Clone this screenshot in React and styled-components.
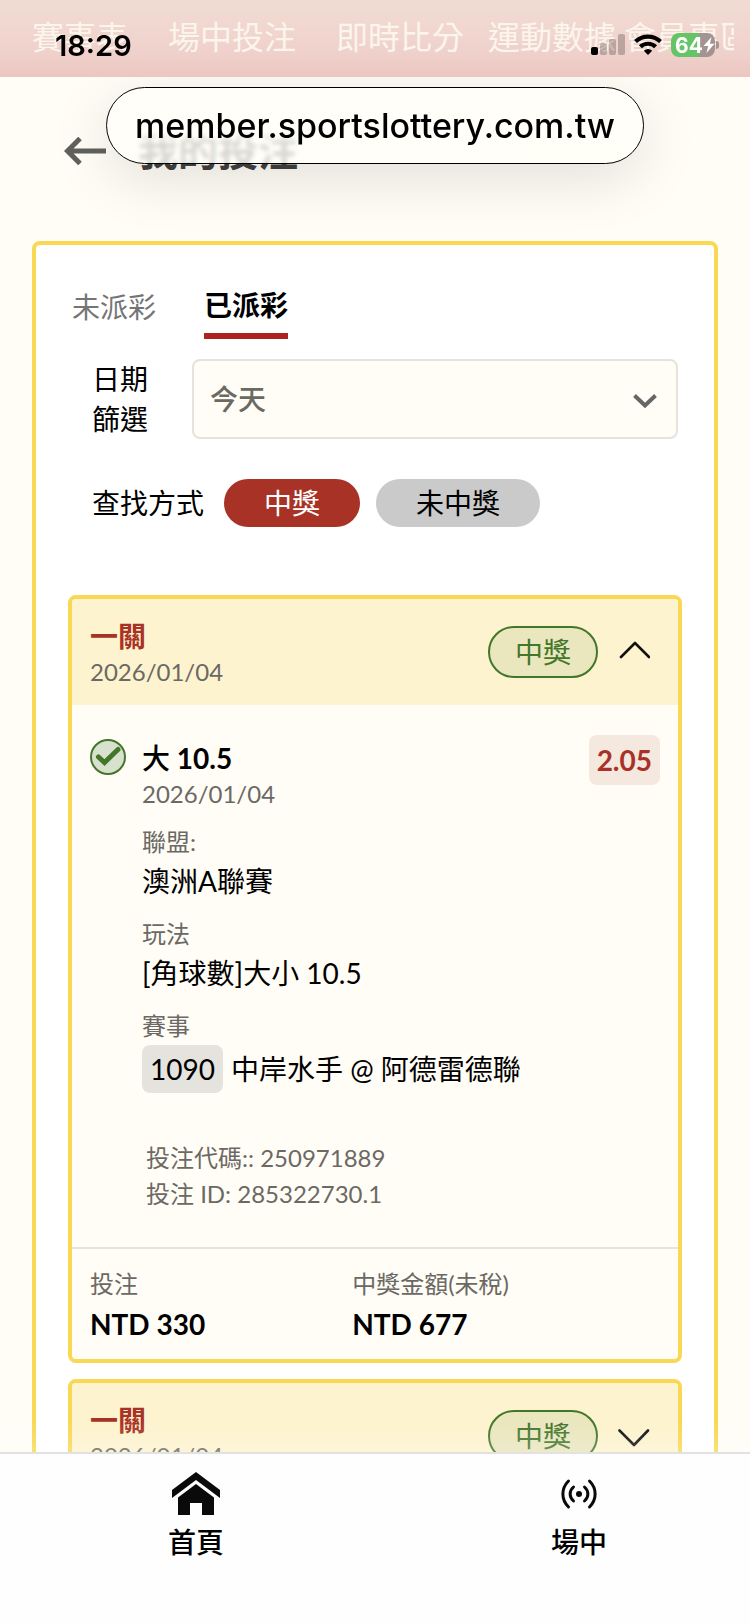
import React, { useState } from "react";
import styled, { createGlobalStyle } from "styled-components";

const color = {
  page: "#fffdf6",
  gold: "#f9d853",
  goldSoft: "#fdf3ce",
  red: "#a83226",
  green: "#43762b",
  muted: "#6b6964",
  line: "#e5e3dd",
};

const GlobalStyle = createGlobalStyle`
  * { box-sizing: border-box; }
  html, body { margin: 0; background: ${color.page}; }
  body {
    font-family: Lato, "Noto Sans CJK TC", sans-serif;
    font-size: 28px;
    color: #000;
  }
  button, select { font: inherit; color: inherit; }
  p, h1, h2, h3, dl, dd, ul { margin: 0; padding: 0; }
  h1, h2, h3 { font-size: inherit; }
`;

const Page = styled.div`
  height: 100vh;
  overflow: hidden;
  background: ${color.page};
`;

/* ---------- site navigation strip ---------- */

const Banner = styled.header`
  position: relative;
  z-index: 3;
  height: 77px;
  padding: 0 16px 0 32px;
  background: linear-gradient(#f0dcd2, #f1d6d0 40%, #efd0ca 70%, #ecc7c1);
`;

const SiteNav = styled.nav`
  display: flex;
  gap: 24px;
  overflow: hidden;
`;

const NavGroup = styled.div`
  display: flex;
  flex: none;
  gap: ${(p) => p.$gap}px;
`;

const NavLink = styled.a`
  flex: none;
  font-size: 32px;
  line-height: 74px;
  color: #fbf5ec;
  text-decoration: none;
  white-space: nowrap;
`;

/* ---------- phone status bar ---------- */

const StatusBar = styled.div`
  position: absolute;
  inset: 0 31px auto 55px;
  height: 90px;
  display: flex;
  align-items: center;
  justify-content: space-between;
  font-family: Inter, sans-serif;
`;

const Clock = styled.span`
  font-size: 29px;
  font-weight: 600;
`;

const StatusIcons = styled.div`
  display: flex;
  align-items: center;
  gap: 9px;
`;

const Battery = styled.div`
  position: relative;
  width: 44px;
  height: 24px;
  margin-right: 4px;
  padding-left: 4px;
  display: flex;
  align-items: center;
  border-radius: 8px;
  color: #fff;
  font-size: 21px;
  font-weight: 700;
  background: linear-gradient(90deg, #65c466 64%, #a39491 64%);

  &::after {
    content: "";
    position: absolute;
    left: 45px;
    top: 8px;
    width: 3px;
    height: 8px;
    border-radius: 0 3px 3px 0;
    background: #a39491;
  }
`;

/* ---------- address bubble ---------- */

const AddressBubble = styled.div`
  position: absolute;
  z-index: 2;
  top: 87px;
  left: 50%;
  transform: translateX(-50%);
  height: 77px;
  padding: 0 28px;
  border: 1px solid #000;
  border-radius: 39px;
  font-family: Inter, sans-serif;
  font-size: 34px;
  font-weight: 500;
  line-height: 76px;
  white-space: nowrap;
  background: linear-gradient(#fffef8 55%, rgba(255, 254, 248, 0.8) 75%);
  backdrop-filter: blur(2px);
  box-shadow: 0 14px 60px rgba(0, 0, 0, 0.12);
`;

/* ---------- page heading ---------- */

const Heading = styled.div`
  display: flex;
  align-items: center;
  gap: 32px;
  height: 164px;
  padding: 50px 64px 66px;
  color: #404040;
`;

const BackButton = styled.button`
  display: flex;
  padding: 0;
  border: 0;
  background: none;
  color: #60605d;
`;

const Title = styled.h1`
  font-size: 40px;
  font-weight: 700;
  line-height: 48px;
`;

/* ---------- bets panel ---------- */

const Panel = styled.main`
  margin: 0 32px;
  padding: 36px 32px 200px;
  border: 4px solid ${color.gold};
  border-radius: 8px;
  background: #fff;
`;

const Tabs = styled.div`
  display: flex;
  gap: 48px;
  padding: 0 4px;
`;

const Tab = styled.button`
  height: 58px;
  padding: 0 0 ${(p) => (p.$active ? 4 : 0)}px;
  border: 0;
  border-bottom: 6px solid ${(p) => (p.$active ? "#ad241f" : "transparent")};
  background: none;
  font-weight: ${(p) => (p.$active ? 700 : 400)};
  line-height: 48px;
  color: ${(p) => (p.$active ? "#000" : "#757575")};
`;

const FilterRow = styled.div`
  display: flex;
  align-items: center;
  margin: 20px 4px 0 24px;
`;

const FilterLabel = styled.label`
  flex: none;
  width: 56px;
  margin-right: 44px;
  line-height: 40px;
`;

const SelectBox = styled.div`
  position: relative;
  flex: 1;

  svg {
    position: absolute;
    right: 20px;
    top: 34px;
    pointer-events: none;
  }
`;

const Select = styled.select`
  display: block;
  appearance: none;
  width: 100%;
  height: 80px;
  padding: 0 48px 0 16px;
  border: 2px solid ${color.line};
  border-radius: 8px;
  background: ${color.page};
  font-weight: 500;
  color: ${color.muted};
`;

const MethodRow = styled.div`
  display: flex;
  align-items: center;
  gap: 16px;
  margin: 40px 4px 68px 24px;
  line-height: 48px;
`;

const MethodLabel = styled.span`
  margin-right: 4px;
`;

const MethodButton = styled.button`
  height: 48px;
  padding: 0 40px;
  border: 0;
  border-radius: 24px;
  line-height: 48px;
  background: ${(p) => (p.$active ? color.red : "#cacaca")};
  color: ${(p) => (p.$active ? "#fff" : "#000")};
`;

/* ---------- bet card ---------- */

const Card = styled.article`
  margin-bottom: 16px;
  border: 4px solid ${color.gold};
  border-radius: 8px;
  overflow: hidden;
  background: ${color.page};
`;

const CardHeader = styled.div`
  display: flex;
  align-items: center;
  padding: 0 28px 0 18px;
  height: 106px;
  background: ${color.goldSoft};
`;

const CardTitles = styled.div`
  flex: 1;
  padding-top: 4px;
`;

const CardTitle = styled.h2`
  font-weight: 700;
  line-height: 36px;
  color: ${color.red};
`;

const Small = styled.p`
  font-size: 24px;
  line-height: 36px;
  color: ${color.muted};
`;

const Badge = styled.span`
  height: 52px;
  padding: 0 25px;
  border: 2px solid ${color.green};
  border-radius: 26px;
  line-height: 48px;
  color: ${color.green};
  background: rgba(67, 118, 43, 0.1);
`;

const ToggleButton = styled.button`
  display: flex;
  margin-left: 20px;
  padding: 0;
  border: 0;
  background: none;
`;

const Leg = styled.div`
  display: flex;
  align-items: flex-start;
  gap: 16px;
  padding: 30px 18px 35px;
`;

const ResultIcon = styled.svg`
  flex: none;
  margin-top: 4px;
`;

const LegInfo = styled.div`
  flex: 1;
  padding-top: 5px;
`;

const LegTitle = styled.h3`
  font-weight: 500;
  line-height: 36px;
`;

const Line = styled.strong`
  font-weight: 700;
`;

const Odds = styled.span`
  padding: 0 8px;
  border-radius: 8px;
  font-weight: 700;
  line-height: 50px;
  color: ${color.red};
  background: #f5e8df;
`;

const Field = styled.dl`
  margin-top: 14px;
`;

const FieldName = styled.dt`
  font-size: 24px;
  line-height: 32px;
  color: ${color.muted};
`;

const FieldValue = styled.dd`
  display: flex;
  align-items: center;
  gap: 8px;
  min-height: 46px;
  padding: ${(p) => (p.$chip ? 3 : 0)}px 0;
  line-height: 46px;
`;

const MatchNumber = styled.span`
  padding: 0 8px;
  border-radius: 8px;
  line-height: 48px;
  background: ${color.line};
`;

const Codes = styled.div`
  margin-top: 44px;
  padding-left: 4px;
`;

const CardFooter = styled.div`
  display: grid;
  grid-template-columns: 46% 1fr;
  padding: 17px 18px 13px;
  border-top: 2px solid ${color.line};
`;

const Amount = styled.p`
  font-weight: 700;
  line-height: 44px;
`;

/* ---------- bottom bar ---------- */

const BottomBar = styled.nav`
  position: fixed;
  inset: auto 0 0 0;
  z-index: 4;
  display: flex;
  justify-content: space-between;
  height: 172px;
  padding: 14px 143px 0 168px;
  border-top: 2px solid #e2e2e2;
  background: #fefefe;

  &::before {
    content: "";
    position: absolute;
    inset: -34px 0 auto 0;
    height: 32px;
    background: linear-gradient(rgba(255, 255, 255, 0), rgba(255, 255, 255, 0.2));
  }
`;

const BottomLink = styled.a`
  display: flex;
  flex-direction: column;
  align-items: center;
  gap: 2px;
  font-weight: 500;
  line-height: 40px;
  color: #000;
  text-decoration: none;

  svg {
    height: 52px;
  }
`;

function SignalIcon() {
  return (
    <svg width="34" height="22" viewBox="0 0 34 22" aria-hidden="true">
      <rect x="0" y="13" width="7" height="8" rx="2" />
      <g opacity="0.22">
        <rect x="9" y="9" width="7" height="12" rx="2" />
        <rect x="18" y="5" width="7" height="16" rx="2" />
        <rect x="27" y="0" width="7" height="21" rx="2" />
      </g>
    </svg>
  );
}

function WifiIcon() {
  return (
    <svg width="28" height="22" viewBox="0 0 28 22" aria-hidden="true">
      <g fill="none" stroke="#000" strokeWidth="4.2">
        <path d="M1.5 7.6a18 18 0 0 1 25 0" />
        <path d="M6.4 12.8a11 11 0 0 1 15.2 0" />
      </g>
      <path d="M14 21l-4.2-4.3a6 6 0 0 1 8.4 0z" />
    </svg>
  );
}

function Chevron({ up }) {
  return (
    <svg width="32" height="22" viewBox="0 0 32 22" fill="none" stroke="#111" strokeWidth="2.6" strokeLinecap="round" strokeLinejoin="round" aria-hidden="true">
      <path d={up ? "M3 16L17 2L31 16" : "M1.500 5.500L16 20L30 5.500"} />
    </svg>
  );
}

function BetCard({ title, date, status, open, onToggle, children }) {
  return (
    <Card>
      <CardHeader>
        <CardTitles>
          <CardTitle>{title}</CardTitle>
          <Small>{date}</Small>
        </CardTitles>
        <Badge>{status}</Badge>
        <ToggleButton type="button" aria-expanded={open} aria-label={title} onClick={onToggle}>
          <Chevron up={open} />
        </ToggleButton>
      </CardHeader>
      {open && children}
    </Card>
  );
}

export default function App() {
  const [tab, setTab] = useState("已派彩");
  const [method, setMethod] = useState("中獎");
  const [openCards, setOpenCards] = useState([true, false]);
  const toggle = (index) => setOpenCards(openCards.map((o, i) => (i === index ? !o : o)));

  return (
    <Page lang="zh-TW">
      <GlobalStyle />
      <Banner>
        <SiteNav>
          <NavGroup $gap={40}>
            <NavLink href="#schedule">賽事表</NavLink>
            <NavLink href="#live">場中投注</NavLink>
            <NavLink href="#scores">即時比分</NavLink>
          </NavGroup>
          <NavGroup $gap={8}>
            <NavLink href="#stats">運動數據</NavLink>
            <NavLink href="#member">會員專區</NavLink>
          </NavGroup>
        </SiteNav>
        <StatusBar>
          <Clock>18:29</Clock>
          <StatusIcons>
            <SignalIcon />
            <WifiIcon />
            <Battery>
              64
              <svg width="12" height="16" viewBox="0 0 12 16" fill="#fff" aria-hidden="true">
                <path d="M8.500 0L0.500 9h4.700L3.500 16l8-9.300H6.900z" />
              </svg>
            </Battery>
          </StatusIcons>
        </StatusBar>
      </Banner>

      <AddressBubble>member.sportslottery.com.tw</AddressBubble>

      <Heading>
        <BackButton type="button" aria-label="返回">
          <svg width="42" height="28" viewBox="0 0 42 28" fill="none" stroke="currentColor" strokeWidth="5" aria-hidden="true">
            <path d="M42 14H4M16 1.500L3.500 14L16 26.500" />
          </svg>
        </BackButton>
        <Title>我的投注</Title>
      </Heading>

      <Panel>
        <Tabs role="tablist">
          {["未派彩", "已派彩"].map((name) => (
            <Tab key={name} type="button" role="tab" aria-selected={tab === name} $active={tab === name} onClick={() => setTab(name)}>
              {name}
            </Tab>
          ))}
        </Tabs>

        <FilterRow>
          <FilterLabel htmlFor="date">日期篩選</FilterLabel>
          <SelectBox>
            <Select id="date">
              <option>今天</option>
            </Select>
            <svg width="26" height="16" viewBox="0 0 26 16" fill="none" stroke="#666" strokeWidth="4" aria-hidden="true">
              <path d="M2.500 2.500L13 12.500L23.500 2.500" />
            </svg>
          </SelectBox>
        </FilterRow>

        <MethodRow>
          <MethodLabel>查找方式</MethodLabel>
          {["中獎", "未中獎"].map((name) => (
            <MethodButton key={name} type="button" aria-pressed={method === name} $active={method === name} onClick={() => setMethod(name)}>
              {name}
            </MethodButton>
          ))}
        </MethodRow>

        <BetCard title="一關" date="2026/01/04" status="中獎" open={openCards[0]} onToggle={() => toggle(0)}>
          <Leg>
            <ResultIcon width="36" height="36" viewBox="0 0 36 36" aria-hidden="true">
              <circle cx="18" cy="18" r="17" fill="#d8e1cd" stroke={color.green} strokeWidth="2" />
              <path d="M8.500 18L14.500 23.500L28 10.500" fill="none" stroke={color.green} strokeWidth="5" strokeLinecap="round" />
            </ResultIcon>
            <LegInfo>
              <LegTitle>
                大<Line> 10.5</Line>
              </LegTitle>
              <Small>2026/01/04</Small>
              <Field>
                <FieldName>聯盟:</FieldName>
                <FieldValue>澳洲A聯賽</FieldValue>
              </Field>
              <Field>
                <FieldName>玩法</FieldName>
                <FieldValue>[角球數]大小 10.5</FieldValue>
              </Field>
              <Field>
                <FieldName>賽事</FieldName>
                <FieldValue $chip>
                  <MatchNumber>1090</MatchNumber>
                  <span>中岸水手 @ 阿德雷德聯</span>
                </FieldValue>
              </Field>
              <Codes>
                <Small>投注代碼:: 250971889</Small>
                <Small>投注 ID: 285322730.1</Small>
              </Codes>
            </LegInfo>
            <Odds>2.05</Odds>
          </Leg>
          <CardFooter>
            <div>
              <Small>投注</Small>
              <Amount>NTD 330</Amount>
            </div>
            <div>
              <Small>中獎金額(未稅)</Small>
              <Amount>NTD 677</Amount>
            </div>
          </CardFooter>
        </BetCard>

        <BetCard title="一關" date="2026/01/04" status="中獎" open={openCards[1]} onToggle={() => toggle(1)} />
      </Panel>

      <BottomBar>
        <BottomLink href="#home">
          <svg width="48" height="52" viewBox="0 0 48 52" fill="#0a0a0a" aria-hidden="true">
            <path d="M24 4L48 22v8L24 12L0 30v-8z" />
            <path d="M24 16L42 29.500V47H30V35H18v12H6V29.500z" />
          </svg>
          首頁
        </BottomLink>
        <BottomLink href="#live">
          <svg width="36" height="52" viewBox="0 0 36 52" fill="none" stroke="#0a0a0a" strokeWidth="3" strokeLinecap="round" aria-hidden="true">
            <circle cx="18" cy="26" r="3" fill="#0a0a0a" stroke="none" />
            <path d="M7.500 13C-0 20.500 -0 31.500 7.500 39M28.500 13C36 20.500 36 31.500 28.500 39" />
            <path d="M12.500 19C8 23 8 29 12.500 33M23.500 19C28 23 28 29 23.500 33" />
          </svg>
          場中
        </BottomLink>
      </BottomBar>
    </Page>
  );
}
